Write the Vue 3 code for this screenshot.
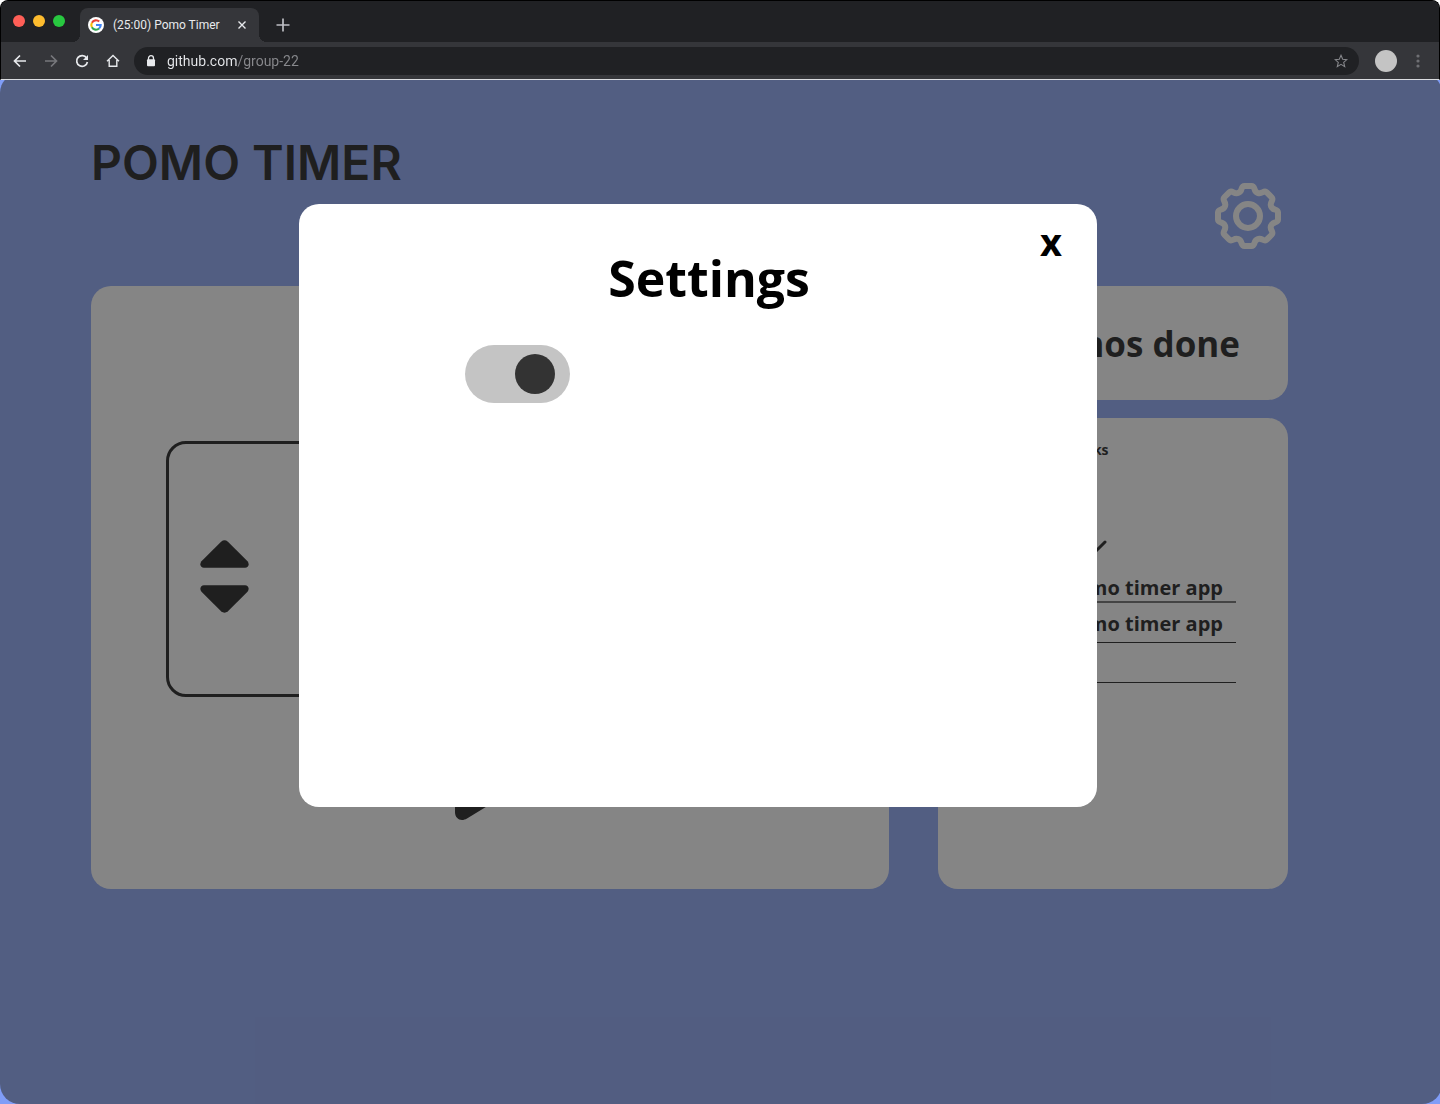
<script setup>
import { ref } from 'vue'

const settingsOpen = ref(true)
const soundOn = ref(true)
const address = ref('github.com/group-22')
const tasks = ref(['Pomo timer app', 'Pomo timer app', ''])

// One rounded tooth and the valley after it, repeated eight times around the centre
const tooth = [[-6.5, -27], [-5.5, -30], [-3.5, -30], [3.5, -30], [5.5, -30], [6.5, -27], [7.5, -23], [11.3, -21.6]]
const turn = ([x, y], i) => {
  const a = (i * Math.PI) / 4
  return `${(x * Math.cos(a) - y * Math.sin(a)).toFixed(2)} ${(x * Math.sin(a) + y * Math.cos(a)).toFixed(2)}`
}
const gearPath = 'M' + turn(tooth[0], 0) + Array.from({ length: 8 }, (_, i) => {
  const p = tooth.map((point) => turn(point, i))
  return `Q${p[1]} ${p[2]}L${p[3]}Q${p[4]} ${p[5]}C${p[6]} ${p[7]} ${turn(tooth[0], i + 1)}`
}).join('') + 'Z'
</script>

<template>
  <div class="window">
    <header class="chrome">
      <div class="tabs">
        <div class="lights"><i class="red"></i><i class="yellow"></i><i class="green"></i></div>
        <div class="tab">
          <svg class="favicon" viewBox="0 0 16 16" aria-hidden="true">
            <circle cx="8" cy="8" r="8" fill="#fff" />
            <g fill="none" stroke-width="2.1">
              <path d="M3.9 5.7A4.7 4.7 0 0 1 11.2 4.6" stroke="#ea4335" />
              <path d="M3.9 10.3a4.7 4.7 0 0 1 0-4.6" stroke="#fbbc05" />
              <path d="M11.1 11.5A4.7 4.7 0 0 1 3.9 10.3" stroke="#34a853" />
              <path d="M8 8h4.7a4.7 4.7 0 0 1-1.6 3.5" stroke="#4285f4" />
            </g>
          </svg>
          <span class="tab-title">(25:00) Pomo Timer</span>
          <button class="icon tab-close" aria-label="Close tab">
            <svg width="10" height="10" viewBox="0 0 10 10"><path d="M1.5 1.5l7 7M8.5 1.5l-7 7" /></svg>
          </button>
        </div>
        <button class="icon new-tab" aria-label="New tab">
          <svg width="14" height="14" viewBox="0 0 14 14"><path d="M7 .5v13M.5 7h13" /></svg>
        </button>
      </div>
      <div class="toolbar">
        <nav class="nav">
          <button class="icon" aria-label="Back">
            <svg width="16" height="16" viewBox="0 0 16 16"><path d="M14 8H3M8 2.5L2.500 8 8 13.500" /></svg>
          </button>
          <button class="icon dim" aria-label="Forward">
            <svg width="16" height="16" viewBox="0 0 16 16"><path d="M2 8h11M8 2.5L13.500 8 8 13.500" /></svg>
          </button>
          <button class="icon" aria-label="Reload">
            <svg width="16" height="16" viewBox="0 0 16 16"><path d="M12.600 5A5.400 5.400 0 1 0 13.400 9" /><path d="M14 2v5H9z" fill="currentColor" stroke="none" /></svg>
          </button>
          <button class="icon home" aria-label="Home">
            <svg width="16" height="16" viewBox="0 0 16 16"><path d="M2 8.200L8 2.500l6 5.700M4.200 7v6.300h7.600V7" /></svg>
          </button>
        </nav>
        <label class="address">
          <svg width="10" height="12" viewBox="0 0 10 12" aria-hidden="true">
            <path d="M2.500 5V3.200a2.500 2.500 0 0 1 5 0V5" fill="none" stroke="#e8eaed" stroke-width="1.300" />
            <rect x="1" y="4.300" width="8" height="7" rx="1" fill="#e8eaed" />
          </svg>
          <input v-model="address" class="url" type="text" aria-label="Address" />
          <svg width="14" height="14" viewBox="0 0 14 14" aria-hidden="true">
            <path d="M7 1.300l1.700 3.900 4.200.4-3.200 2.800 1 4.200L7 10.400l-3.700 2.200 1-4.200L1.100 5.600l4.200-.4z" fill="none" stroke="#85868a" stroke-width="1.100" />
          </svg>
        </label>
        <button class="avatar" aria-label="Profile"></button>
        <button class="icon menu" aria-label="Menu">
          <svg width="4" height="14" viewBox="0 0 4 14"><g fill="#6f7074" stroke="none"><circle cx="2" cy="2" r="1.600" /><circle cx="2" cy="7" r="1.600" /><circle cx="2" cy="12" r="1.600" /></g></svg>
        </button>
      </div>
    </header>

    <main class="page">
      <div class="heading">
        <h1>POMO TIMER</h1>
        <button class="gear" aria-label="Settings" @click="settingsOpen = true">
          <svg width="66" height="66" viewBox="-33 -33 66 66" fill="none" stroke="#fff" stroke-width="6" stroke-linejoin="round">
            <path :d="gearPath" />
            <circle r="12" />
          </svg>
        </button>
      </div>
      <div class="board">
        <section class="card timer">
          <div class="clock">
            <button class="step" aria-label="More time">
              <svg width="49" height="28" viewBox="0 0 50 28"><path d="M21.500 1.500q3.500-3 7 0L48.500 21.500c2.500 3 .5 6.500-2.500 6.500H4c-3 0-5-3.500-2.500-6.500z" /></svg>
            </button>
            <button class="step" aria-label="Less time">
              <svg width="49" height="28" viewBox="0 0 50 28"><path d="M21.500 26.500q3.500 3 7 0L48.500 6.500C51 3.500 49 0 46 0H4C1 0-1 3.500 1.500 6.500z" /></svg>
            </button>
          </div>
          <button class="play" aria-label="Start">
            <svg width="70" height="80" viewBox="0 0 70 80"><path d="M0 8C0 1 6-2 12 1.500L65 34q8 6 0 12L12 78.500C6 82 0 79 0 72z" /></svg>
          </button>
        </section>
        <div class="side">
          <section class="card done">Pomos done</section>
          <section class="card tasks">
            <h2>Tasks</h2>
            <svg class="check" width="26" height="20" viewBox="0 0 26 20"><path d="M2 10l7 7L24 2" fill="none" stroke="#000" stroke-width="3" stroke-linecap="round" /></svg>
            <ul>
              <li v-for="(task, i) in tasks" :key="i">{{ task }}</li>
            </ul>
          </section>
        </div>
      </div>

      <div v-if="settingsOpen" class="overlay">
        <div class="dialog" role="dialog" aria-labelledby="settings-title">
          <button class="close" aria-label="Close settings" @click="settingsOpen = false">x</button>
          <h2 id="settings-title">Settings</h2>
          <input v-model="soundOn" class="toggle" type="checkbox" role="switch" aria-label="Toggle setting" />
        </div>
      </div>
    </main>
  </div>
</template>

<style>
body { margin: 0; background: #fff; }
</style>

<style scoped>
* { box-sizing: border-box; }
button { padding: 0; border: 0; background: none; color: inherit; font: inherit; cursor: pointer; }
svg { display: block; }
h1, h2, ul { margin: 0; padding: 0; }
.window { display: flex; flex-direction: column; min-height: 100vh; font-family: "Open Sans", sans-serif; }

.chrome { height: 80px; border: 1px solid #000; border-bottom-color: #dadce0; border-radius: 8px 8px 0 0; background: #35363a; color: #e8eaed; font-family: Roboto, sans-serif; overflow: hidden; }
.tabs { display: flex; height: 41px; padding-left: 12px; background: #202124; }
.lights { display: flex; gap: 8px; width: 67px; padding-top: 14px; }
.lights i { width: 12px; height: 12px; border-radius: 50%; }
.red { background: #ff5f57; }
.yellow { background: #febc2e; }
.green { background: #28c840; }
.tab { position: relative; display: flex; align-items: center; width: 179px; height: 34px; margin-top: 7px; padding: 0 12px 0 8px; border-radius: 8px 8px 0 0; background: #35363a; }
.tab::before, .tab::after { content: ""; position: absolute; bottom: 0; width: 8px; height: 8px; }
.tab::before { right: 100%; background: radial-gradient(circle at 0 0, #202124 8px, #35363a 8px); }
.tab::after { left: 100%; background: radial-gradient(circle at 100% 0, #202124 8px, #35363a 8px); }
.favicon { width: 16px; height: 16px; }
.tab-title { flex: 1; margin-left: 9px; font-size: 12px; line-height: 16px; white-space: nowrap; }
.icon svg { fill: none; stroke: currentColor; stroke-width: 1.7; }
.tab-close svg, .home svg { stroke-width: 1.4; }
.new-tab { margin-left: 17px; padding-top: 7px; color: #bdbec4; }
.toolbar { display: flex; align-items: center; height: 37px; padding: 0 19px 0 11px; }
.nav { display: flex; gap: 15px; margin-right: 13px; }
.dim { color: #77787c; }
.address { display: flex; flex: 1; align-items: center; gap: 11px; height: 28px; padding: 0 11px 0 12px; border-radius: 14px; background: #202124; }
.url { flex: 1; min-width: 0; padding: 0; border: 0; outline: 0; color: #e8eaed; font: 14px/20px Roboto, sans-serif; background: linear-gradient(to right, #e8eaed 71px, #88898d 71px); background-clip: text; -webkit-text-fill-color: transparent; }
.avatar { width: 22px; height: 22px; margin: 0 19px 0 16px; border-radius: 50%; background: #c4c4c4; }

.page { position: relative; flex: 1; padding: 51px 152px 48px 91px; background: #809df7; color: #000; overflow: hidden; }
.heading { display: flex; justify-content: space-between; height: 155px; }
h1 { font: 600 48px/64px Inter, sans-serif; }
.gear { align-self: flex-start; margin: 52px 7px 0 0; }
.board { display: grid; grid-template-columns: 1fr 350px; gap: 49px; }
.card { border-radius: 20px; background: #fff; }
.timer { padding: 155px 75px 0; }
.clock { display: flex; flex-direction: column; justify-content: center; gap: 17px; height: 256px; padding: 14px 31px 0; border: 3px solid #000; border-radius: 20px; }
.step { width: 49px; }
.play { display: block; margin: 43px auto 0 289px; }
.side { display: flex; flex-direction: column; gap: 18px; }
.done { padding: 34px 48px 32px 0; font-size: 35px; font-weight: 700; line-height: 48px; text-align: right; }
.tasks { height: 471px; padding: 22px 52px 0 48px; }
.tasks h2 { font-size: 14px; line-height: 20px; text-align: center; padding-right: 44px; }
.check { margin: 80px 0 0 95px; }
ul { list-style: none; margin-top: 3px; }
li { height: 40px; border-bottom: 1px solid #000; padding: 7px 13px 0 0; font-size: 20px; font-weight: 700; line-height: 28px; text-align: right; }
li:first-child { padding-top: 11px; border-bottom: 2px solid #5c5c5c; }

.overlay { position: absolute; inset: -7px -2px 0 0; display: flex; align-items: flex-start; justify-content: center; padding: 131px 46px 0 0; border-radius: 20px; background: rgba(51, 51, 51, 0.6); }
.dialog { display: flex; flex-direction: column; width: 798px; height: 603px; padding: 20px 32px 0 24px; border-radius: 20px; background: #fff; }
.close { align-self: flex-end; width: 28px; font-size: 38px; font-weight: 700; line-height: 34px; }
.dialog h2 { font-size: 50px; line-height: 64px; text-align: center; padding-left: 30px; margin-top: -12px; }
.toggle { appearance: none; display: flex; align-items: center; width: 105px; height: 58px; margin: 35px 0 0 142px; padding: 0 15px; border-radius: 29px; background: #c4c4c4; cursor: pointer; }
.toggle::before { content: ""; width: 40px; height: 40px; border-radius: 50%; background: #333; }
.toggle:checked { justify-content: flex-end; }
</style>
